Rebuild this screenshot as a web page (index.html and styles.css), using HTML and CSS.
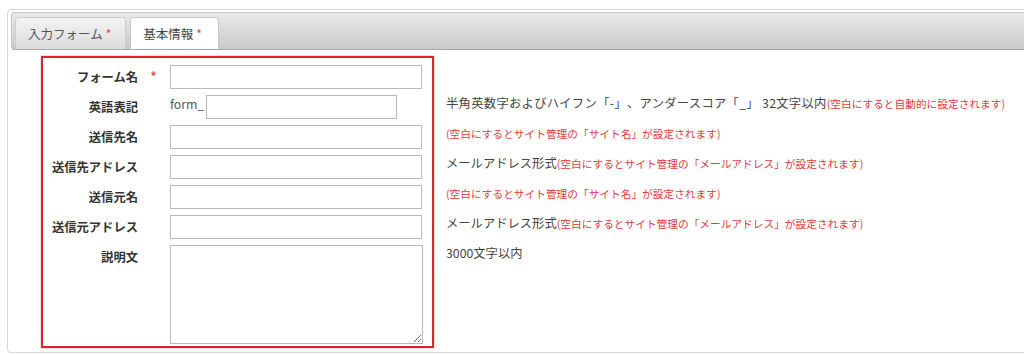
FILE: index.html
```html
<!DOCTYPE html>
<html lang="ja">
<head>
<meta charset="utf-8">
<title>フォーム設定</title>
<link rel="stylesheet" href="styles.css">
</head>
<body>
<div class="widget">
  <ul class="tabs">
    <li class="tab">入力フォーム<span class="req">*</span></li>
    <li class="tab active">基本情報<span class="req">*</span></li>
  </ul>
  <div class="panel">
    <div class="formbox">
      <div class="row">
        <div class="label">フォーム名</div>
        <div class="star">*</div>
        <div class="field"><input class="text" type="text"></div>
      </div>
      <div class="row">
        <div class="label">英語表記</div>
        <div class="star"></div>
        <div class="field"><span class="prefix">form_</span><input class="text short" type="text"></div>
      </div>
      <div class="row">
        <div class="label">送信先名</div>
        <div class="star"></div>
        <div class="field"><input class="text" type="text"></div>
      </div>
      <div class="row">
        <div class="label">送信先アドレス</div>
        <div class="star"></div>
        <div class="field"><input class="text" type="text"></div>
      </div>
      <div class="row">
        <div class="label">送信元名</div>
        <div class="star"></div>
        <div class="field"><input class="text" type="text"></div>
      </div>
      <div class="row">
        <div class="label">送信元アドレス</div>
        <div class="star"></div>
        <div class="field"><input class="text" type="text"></div>
      </div>
      <div class="row last">
        <div class="label">説明文</div>
        <div class="star"></div>
        <div class="field"><textarea class="area"></textarea></div>
      </div>
    </div>
    <div class="notes">
      <div class="note"></div>
      <div class="note"><span class="spec">半角英数字およびハイフン「-」、アンダースコア「_」 32文字以内</span><span class="warn">(空白にすると自動的に設定されます)</span></div>
      <div class="note"><span class="warn">(空白にするとサイト管理の「サイト名」が設定されます)</span></div>
      <div class="note">メールアドレス形式<span class="warn">(空白にするとサイト管理の「メールアドレス」が設定されます)</span></div>
      <div class="note"><span class="warn">(空白にするとサイト管理の「サイト名」が設定されます)</span></div>
      <div class="note">メールアドレス形式<span class="warn">(空白にするとサイト管理の「メールアドレス」が設定されます)</span></div>
      <div class="note">3000文字以内</div>
    </div>
  </div>
</div>
</body>
</html>
```

FILE: styles.css
```css
html, body {
  margin: 0;
  padding: 0;
  background: #fff;
  overflow: hidden;
  height: 354px;
}
body {
  font-family: "Noto Sans CJK JP", "Noto Sans", sans-serif;
  color: #333;
  text-spacing-trim: space-all;
}
.widget {
  margin: 9px -20px 0 7px;
  border: 1px solid #d6d6d6;
  border-radius: 4px;
  padding: 2px 3px;
  height: 338px;
  background: #fff;
}
.tabs {
  list-style: none;
  margin: 0;
  padding: 4px 0 0 3px;
  height: 32px;
  display: flex;
  gap: 4px;
  border: 1px solid #c4c4c4;
  border-radius: 4px;
  background: linear-gradient(#e9e9e9, #c9c9c9);
  border-bottom-color: #a9a9a9;
}
.tab {
  box-sizing: border-box;
  height: 32px;
  margin-bottom: -1px;
  padding: 0 14px 0 12px;
  display: flex;
  align-items: center;
  font-size: 12.5px;
  color: #555;
  border: 1px solid #cdcdcd;
  border-bottom: 0;
  border-radius: 4px 4px 0 0;
  background: linear-gradient(#f3f3f3, #dcdcdc);
}
.tab.active {
  background: #fff;
  border-color: #c7c7c7;
  color: #444;
  padding-right: 16px;
}
.req {
  color: #e84040;
  font-size: 12px;
  margin-left: 3px;
}
.panel {
  display: flex;
  align-items: flex-start;
  padding: 6px 0 0 30px;
}
.formbox {
  box-sizing: border-box;
  width: 393px;
  border: 2px solid #d9262c;
  box-shadow: 0 0 2px rgba(217, 38, 44, 0.45);
  padding: 7px 9px 2px 0;
  display: flex;
  flex-direction: column;
  gap: 6px;
}
.row {
  display: grid;
  grid-template-columns: 95px 32px 253px;
  height: 24px;
}
.row.last {
  height: 99px;
}
.label {
  text-align: right;
  font-weight: bold;
  font-size: 12.3px;
  line-height: 24px;
  color: #333;
}
.star {
  color: #e84040;
  font-size: 15px;
  line-height: 24px;
  padding-left: 12px;
}
.field {
  display: flex;
  align-items: flex-start;
}
.text {
  box-sizing: border-box;
  width: 252px;
  height: 24px;
  margin: 0;
  border: 1px solid #b8b8b8;
  background: #fff;
  font-family: inherit;
}
.text.short {
  width: 191px;
}
.prefix {
  width: 36px;
  font-size: 12.3px;
  line-height: 16px;
  padding-top: 1px;
  color: #555;
}
.area {
  box-sizing: border-box;
  width: 253px;
  height: 99px;
  margin: 0;
  border: 1px solid #b8b8b8;
  font-family: inherit;
  resize: both;
}
.notes {
  margin-left: 12px;
  padding-top: 9px;
  display: flex;
  flex-direction: column;
}
.note {
  height: 30px;
  font-size: 12.3px;
  line-height: 16px;
  color: #444;
  white-space: nowrap;
}
.spec {
  letter-spacing: 0.3px;
}
.warn {
  color: #e23a3a;
  font-size: 10.7px;
}
```
